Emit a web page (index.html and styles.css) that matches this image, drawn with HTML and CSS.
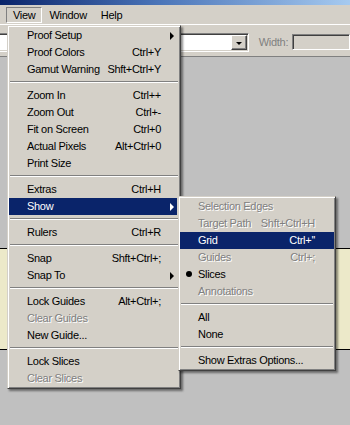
FILE: index.html
```html
<!DOCTYPE html>
<html>
<head>
    <title>View menu</title>
    <link rel="stylesheet" href="styles.css">
</head>
<body>
    <div class="titlebar"></div>
    <div class="menubar">
        <span class="mb-item pressed">View</span>
        <span class="mb-item">Window</span>
        <span class="mb-item">Help</span>
    </div>
    <div class="toolbar">
        <div class="combo">
            <div class="combo-field"></div>
            <div class="combo-btn"><span class="tri-down"></span></div>
        </div>
        <span class="tb-label">Width:</span>
        <div class="tb-input"></div>
    </div>
    <div class="workspace">
        <div class="doc-band"></div>
    </div>

    <div class="menu main-menu">
        <div class="item"><span>Proof Setup</span><span class="arrow"></span></div>
        <div class="item"><span>Proof Colors</span><span>Ctrl+Y</span></div>
        <div class="item"><span>Gamut Warning</span><span>Shft+Ctrl+Y</span></div>
        <div class="sep"></div>
        <div class="item"><span>Zoom In</span><span>Ctrl++</span></div>
        <div class="item"><span>Zoom Out</span><span>Ctrl+-</span></div>
        <div class="item"><span>Fit on Screen</span><span>Ctrl+0</span></div>
        <div class="item"><span>Actual Pixels</span><span>Alt+Ctrl+0</span></div>
        <div class="item"><span>Print Size</span></div>
        <div class="sep"></div>
        <div class="item"><span>Extras</span><span>Ctrl+H</span></div>
        <div class="item active"><span>Show</span><span class="arrow"></span></div>
        <div class="sep"></div>
        <div class="item"><span>Rulers</span><span>Ctrl+R</span></div>
        <div class="sep"></div>
        <div class="item"><span>Snap</span><span>Shft+Ctrl+;</span></div>
        <div class="item"><span>Snap To</span><span class="arrow"></span></div>
        <div class="sep"></div>
        <div class="item"><span>Lock Guides</span><span>Alt+Ctrl+;</span></div>
        <div class="item disabled"><span>Clear Guides</span></div>
        <div class="item"><span>New Guide...</span></div>
        <div class="sep"></div>
        <div class="item"><span>Lock Slices</span></div>
        <div class="item disabled"><span>Clear Slices</span></div>
    </div>

    <div class="menu sub-menu">
        <div class="item disabled"><span>Selection Edges</span></div>
        <div class="item disabled"><span>Target Path</span><span>Shft+Ctrl+H</span></div>
        <div class="item active"><span>Grid</span><span>Ctrl+''</span></div>
        <div class="item disabled"><span>Guides</span><span>Ctrl+;</span></div>
        <div class="item"><span><span class="bullet"></span>Slices</span></div>
        <div class="item disabled"><span>Annotations</span></div>
        <div class="sep"></div>
        <div class="item"><span>All</span></div>
        <div class="item"><span>None</span></div>
        <div class="sep"></div>
        <div class="item"><span>Show Extras Options...</span></div>
    </div>
</body>
</html>
```

FILE: styles.css
```css
body {
    margin: 0;
    width: 350px;
    height: 425px;
    overflow: hidden;
    position: relative;
    display: flex;
    flex-direction: column;
    font-family: "Liberation Sans", Arial, sans-serif;
    font-size: 11px;
    letter-spacing: -0.3px;
    color: #000;
    background: #c0c0c0;
}

.titlebar {
    height: 5px;
    background: linear-gradient(to right, #0a246a, #4a74b8 45%, #a6caf0);
}

.menubar {
    height: 19px;
    background: #d4d0c8;
    display: flex;
    align-items: flex-start;
    padding-left: 6px;
}

.mb-item {
    margin-top: 2px;
    height: 14px;
    line-height: 14px;
    padding: 0 6px;
    border: 1px solid transparent;
}

.mb-item.pressed {
    border-color: #808080 #fff #fff #808080;
}

.toolbar {
    height: 33px;
    box-sizing: border-box;
    background: #d4d0c8;
    border-top: 1px solid #fff;
    border-bottom: 1px solid #808080;
    display: flex;
    align-items: flex-start;
    padding-top: 8px;
}

.combo {
    margin-left: -21px;
    width: 280px;
    height: 19px;
    box-sizing: border-box;
    display: flex;
    border: 1px solid;
    border-color: #808080 #fff #fff #808080;
    box-shadow: inset 1px 1px #404040, inset -1px -1px #d4d0c8;
    padding: 1px;
    background: #fff;
}

.combo-field {
    flex: 1;
}

.combo-btn {
    width: 16px;
    height: 15px;
    box-sizing: border-box;
    background: #d4d0c8;
    border: 1px solid;
    border-color: #fff #404040 #404040 #fff;
    box-shadow: inset -1px -1px #808080;
    display: flex;
    align-items: center;
    justify-content: center;
}

.tri-down {
    width: 0;
    height: 0;
    margin-top: 1px;
    border-top: 3px solid #000;
    border-left: 3px solid transparent;
    border-right: 3px solid transparent;
}

.tb-label {
    margin-left: 10px;
    line-height: 19px;
    color: #808080;
}

.tb-input {
    margin-left: 4px;
    margin-top: 1px;
    width: 60px;
    height: 16px;
    box-sizing: border-box;
    border: 1px solid;
    border-color: #808080 #fff #fff #808080;
    box-shadow: inset 1px 1px #404040;
    background: #d4d0c8;
}

.workspace {
    flex: 1;
    background: #c0c0c0;
}

.doc-band {
    margin-top: 191px;
    height: 102px;
    box-sizing: border-box;
    border-top: 1px solid #000;
    border-bottom: 1px solid #000;
    background: #ece9c9;
}

.menu {
    position: absolute;
    box-sizing: border-box;
    background: #d4d0c8;
    border: 1px solid;
    border-color: #d4d0c8 #404040 #404040 #d4d0c8;
    box-shadow: inset 1px 1px #fff, inset -1px -1px #808080, 2px 2px 2px rgba(0, 0, 0, 0.45);
    padding: 1px;
}

.main-menu {
    left: 7px;
    top: 25px;
    width: 174px;
}

.sub-menu {
    left: 178px;
    top: 196px;
    width: 158px;
}

.item {
    height: 17px;
    line-height: 17px;
    display: flex;
    justify-content: space-between;
    align-items: center;
    white-space: nowrap;
}

.main-menu .item {
    margin-right: 2px;
    padding: 0 16px 0 18px;
}

.sub-menu .item {
    padding: 0 19px 0 18px;
}

.item.active {
    background: #0a246a;
    color: #fff;
}

.item.disabled {
    color: #808080;
    text-shadow: 1px 1px 0 #fff;
}

.sep {
    height: 0;
    border-top: 1px solid #808080;
    border-bottom: 1px solid #fff;
    margin: 3px 1px 4px;
}

.arrow {
    width: 0;
    height: 0;
    margin-right: -13px;
    border-left: 4px solid currentColor;
    border-top: 4px solid transparent;
    border-bottom: 4px solid transparent;
}

.bullet {
    display: inline-block;
    width: 6px;
    height: 6px;
    border-radius: 50%;
    background: #000;
    margin-left: -12px;
    margin-right: 6px;
    vertical-align: 1px;
}
```
